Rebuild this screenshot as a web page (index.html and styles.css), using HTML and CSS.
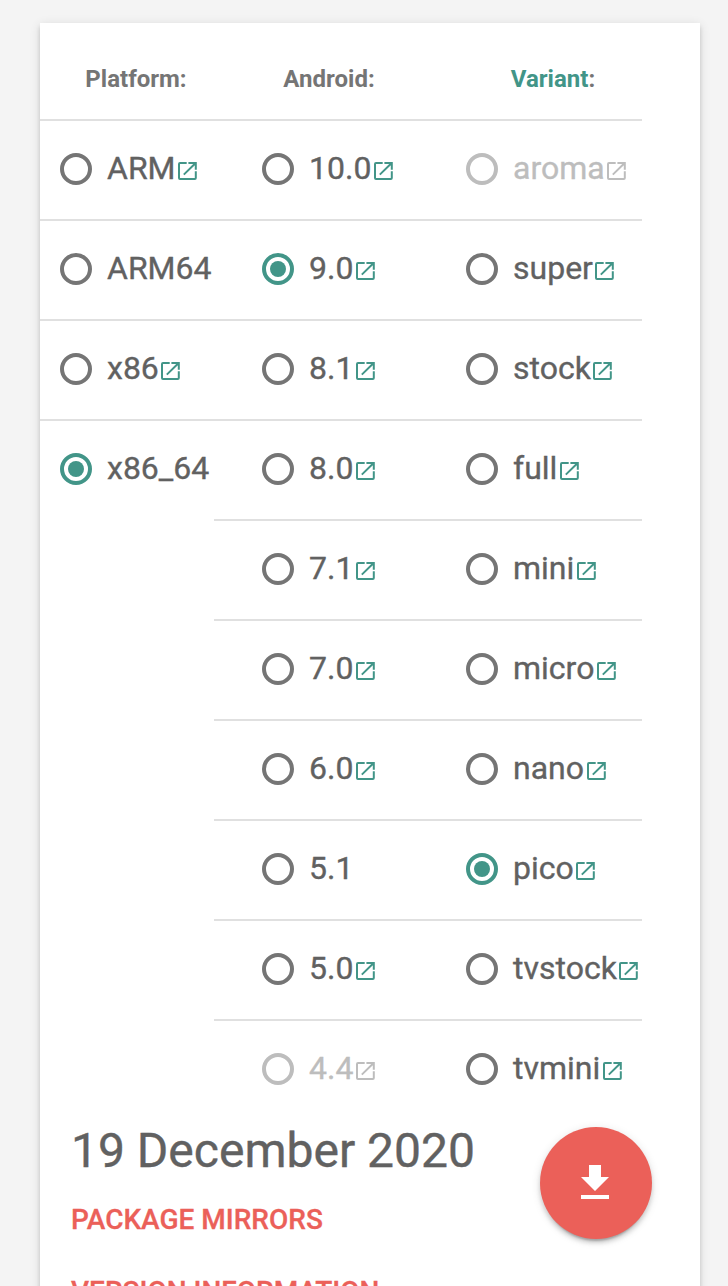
FILE: index.html
```html
<!DOCTYPE html>
<html lang="en">
<head>
<meta charset="utf-8">
<title>Package selection</title>
<link rel="stylesheet" href="styles.css">
</head>
<body>
<svg class="sprite" width="0" height="0">
  <symbol id="open" viewBox="0 0 19 18">
    <path fill="none" stroke="currentColor" stroke-width="2" d="M8.7 1H2Q1 1 1 2V16Q1 17 2 17H16.8Q17.8 17 17.8 16V9.3M10.4 1H17.8V7.8M17.4 1.2L5.8 12.6"/>
  </symbol>
</svg>
<main class="card">
  <form class="options">
    <div class="column platform">
      <div class="heading">Platform:</div>
      <label class="option"><i class="radio"></i><span>ARM</span><svg class="link"><use href="#open"/></svg></label>
      <label class="option"><i class="radio"></i><span>ARM64</span></label>
      <label class="option"><i class="radio"></i><span>x86</span><svg class="link"><use href="#open"/></svg></label>
      <label class="option"><i class="radio checked"></i><span>x86_64</span></label>
    </div>
    <div class="column android">
      <div class="heading">Android:</div>
      <label class="option"><i class="radio"></i><span>10.0</span><svg class="link"><use href="#open"/></svg></label>
      <label class="option"><i class="radio checked"></i><span>9.0</span><svg class="link"><use href="#open"/></svg></label>
      <label class="option"><i class="radio"></i><span>8.1</span><svg class="link"><use href="#open"/></svg></label>
      <label class="option"><i class="radio"></i><span>8.0</span><svg class="link"><use href="#open"/></svg></label>
      <label class="option"><i class="radio"></i><span>7.1</span><svg class="link"><use href="#open"/></svg></label>
      <label class="option"><i class="radio"></i><span>7.0</span><svg class="link"><use href="#open"/></svg></label>
      <label class="option"><i class="radio"></i><span>6.0</span><svg class="link"><use href="#open"/></svg></label>
      <label class="option"><i class="radio"></i><span>5.1</span></label>
      <label class="option"><i class="radio"></i><span>5.0</span><svg class="link"><use href="#open"/></svg></label>
      <label class="option disabled"><i class="radio"></i><span>4.4</span><svg class="link"><use href="#open"/></svg></label>
    </div>
    <div class="column variant">
      <div class="heading"><a class="accent">Variant</a>:</div>
      <label class="option disabled"><i class="radio"></i><span>aroma</span><svg class="link"><use href="#open"/></svg></label>
      <label class="option"><i class="radio"></i><span>super</span><svg class="link"><use href="#open"/></svg></label>
      <label class="option"><i class="radio"></i><span>stock</span><svg class="link"><use href="#open"/></svg></label>
      <label class="option"><i class="radio"></i><span>full</span><svg class="link"><use href="#open"/></svg></label>
      <label class="option"><i class="radio"></i><span>mini</span><svg class="link"><use href="#open"/></svg></label>
      <label class="option"><i class="radio"></i><span>micro</span><svg class="link"><use href="#open"/></svg></label>
      <label class="option"><i class="radio"></i><span>nano</span><svg class="link"><use href="#open"/></svg></label>
      <label class="option"><i class="radio checked"></i><span>pico</span><svg class="link"><use href="#open"/></svg></label>
      <label class="option"><i class="radio"></i><span>tvstock</span><svg class="link"><use href="#open"/></svg></label>
      <label class="option"><i class="radio"></i><span>tvmini</span><svg class="link"><use href="#open"/></svg></label>
    </div>
  </form>
  <section class="release">
    <div class="details">
      <h1 class="date">19 December 2020</h1>
      <a class="action">PACKAGE MIRRORS</a>
      <a class="action">VERSION INFORMATION</a>
    </div>
    <button class="download" type="button" aria-label="Download">
      <svg width="48" height="48" viewBox="0 0 24 24" fill="currentColor"><path d="M19 9h-4V3H9v6H5l7 7 7-7zM5 18v2h14v-2H5z"/></svg>
    </button>
  </section>
</main>
</body>
</html>
```
FILE: styles.css
```css
* { box-sizing: border-box; }
body {
  margin: 0;
  height: 1286px;
  overflow: hidden;
  padding: 23px 28px 0 40px;
  background: #f4f4f4;
  color: #616161;
  font-family: Roboto, sans-serif;
}
.sprite { display: block; height: 0; }
.card {
  height: 1400px;
  background: #fff;
  box-shadow: 0 4px 4px rgba(0,0,0,.14), 0 6px 2px -4px rgba(0,0,0,.2), 0 2px 10px rgba(0,0,0,.12);
}
.options {
  display: grid;
  grid-template-columns: 174px 204px 224px;
  align-items: start;
}
.column { display: flex; flex-direction: column; }
.heading {
  height: 96px;
  padding-top: 40px;
  font-size: 24px;
  line-height: 32px;
  font-weight: 700;
  text-align: center;
  color: #757575;
}
.platform .heading { padding-left: 18px; }
.android .heading { padding-left: 48px; padding-right: 22px; }
.variant .heading { padding-left: 48px; padding-right: 2px; }
.accent { color: #429588; }
.option {
  display: flex;
  align-items: center;
  height: 100px;
  padding: 0 0 2px 48px;
  border-top: 2px solid #e0e0e0;
  font-size: 32px;
  line-height: 40px;
  white-space: nowrap;
}
.option span {
  padding-bottom: 2px;
  -webkit-text-stroke: .35px currentColor;
}
.platform .option { padding-left: 20px; }
.radio {
  flex: none;
  display: grid;
  place-items: center;
  width: 32px;
  height: 32px;
  margin-right: 15px;
  border: 4px solid #757575;
  border-radius: 50%;
}
.checked { border-color: #429588; }
.checked::after {
  content: "";
  width: 16px;
  height: 16px;
  border-radius: 50%;
  background: #429588;
}
.link {
  flex: none;
  width: 19px;
  height: 18px;
  margin: 4px 0 0 2.5px;
  color: #429588;
}
.disabled, .disabled .link { color: #bdbdbd; }
.disabled .radio { border-color: #bdbdbd; }
.release {
  display: flex;
  justify-content: space-between;
  padding: 0 48px 0 31px;
}
.details { display: flex; flex-direction: column; }
.date {
  margin: 0 0 25px;
  padding-top: 4px;
  font-size: 48px;
  line-height: 56px;
  font-weight: 400;
  -webkit-text-stroke: .4px currentColor;
}
.action {
  margin-bottom: 40px;
  font-size: 28px;
  line-height: 32px;
  font-weight: 500;
  color: #eb6059;
  -webkit-text-stroke: .3px currentColor;
}
.download {
  display: flex;
  align-items: center;
  justify-content: center;
  width: 112px;
  height: 112px;
  margin-top: 8px;
  padding: 0 2px 0 0;
  border: 0;
  border-radius: 50%;
  background: #eb6059;
  color: #fff;
  box-shadow: 0 4px 4px rgba(0,0,0,.14), 0 6px 2px -4px rgba(0,0,0,.2), 0 2px 10px rgba(0,0,0,.12);
}
```
